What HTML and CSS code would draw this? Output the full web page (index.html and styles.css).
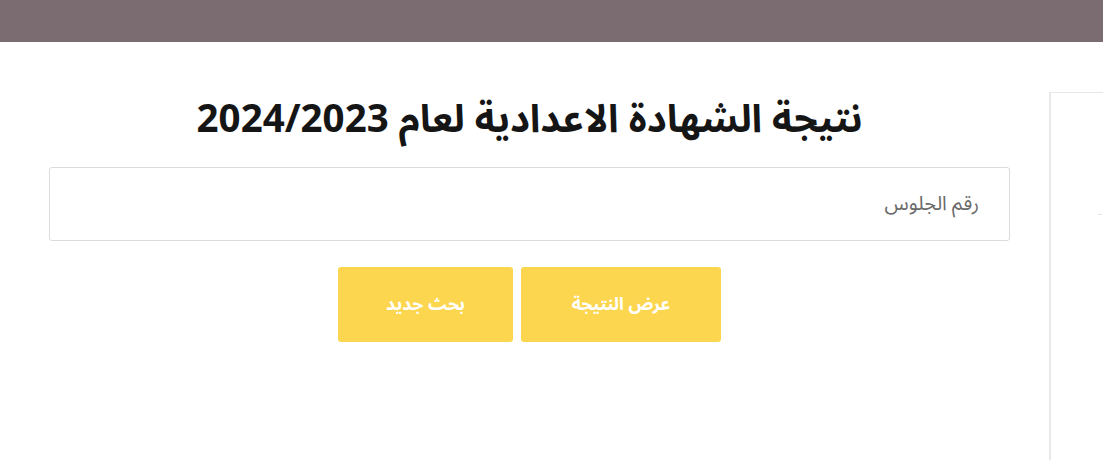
FILE: index.html
```html
<!DOCTYPE html>
<html lang="ar" dir="rtl">
<head>
<meta charset="utf-8">
<title>نتيجة الشهادة الاعدادية</title>
<link rel="stylesheet" href="styles.css">
</head>
<body>
<header class="topbar"></header>
<div class="layout">
  <aside class="sidebar"><span class="mark"></span></aside>
  <main class="main">
    <h1 class="title">نتيجة الشهادة الاعدادية لعام 2024/2023</h1>
    <form class="search" onsubmit="return false">
      <input class="seat" type="text" placeholder="رقم الجلوس">
      <div class="actions">
        <button class="btn" type="submit">عرض النتيجة</button>
        <button class="btn btn-new" type="reset">بحث جديد</button>
      </div>
    </form>
  </main>
</div>
</body>
</html>
```
FILE: styles.css
```css
* { box-sizing: border-box; }
html, body { margin: 0; padding: 0; }
body {
  width: 1103px;
  height: 460px;
  overflow: hidden;
  background: #fff;
  font-family: "Noto Sans Arabic", "DejaVu Sans", sans-serif;
  color: #111;
}
.topbar {
  height: 42px;
  background: #7a6c71;
}
.layout {
  display: flex;
  gap: 39px;
  padding-left: 49px;
}
.sidebar {
  flex: 1;
  margin-top: 50px;
  height: 380px;
  border-top: 1px solid #e6e6e6;
  border-left: 2px solid #e8e8e8;
  position: relative;
}
.mark {
  position: absolute;
  right: 1px;
  top: 121px;
  width: 4px;
  height: 1px;
  background: #e6e6e6;
}
.main {
  width: 961px;
  padding-top: 54px;
}
.title {
  margin: 0;
  text-align: center;
  font-size: 38.5px;
  font-weight: 700;
  line-height: 48px;
  color: #151515;
}
.search {
  margin-top: 23px;
}
.seat {
  display: block;
  width: 100%;
  height: 74px;
  border: 1px solid #dcdcdc;
  border-radius: 3px;
  padding: 0 30px;
  font-family: inherit;
  font-size: 20px;
  color: #333;
  background: #fff;
  outline: none;
}
.seat::placeholder { color: #6b6b6b; }
.actions {
  display: flex;
  justify-content: center;
  gap: 8px;
  margin-top: 26px;
}
.btn {
  width: 200px;
  height: 75px;
  border: 0;
  border-radius: 3px;
  background: #fdd64f;
  color: #fff;
  font-family: inherit;
  font-size: 17.5px;
  font-weight: 700;
  cursor: pointer;
}
.btn-new { width: 175px; }
```
